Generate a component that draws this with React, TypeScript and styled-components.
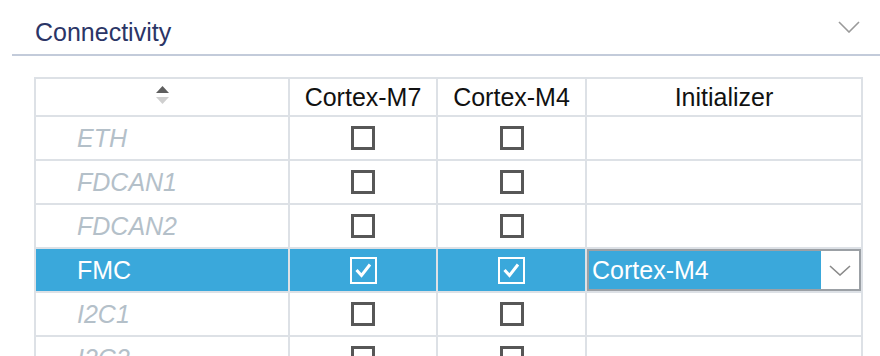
import React from "react";
import styled, { createGlobalStyle } from "styled-components";

const GlobalStyle = createGlobalStyle`
  html, body { margin: 0; padding: 0; background: #ffffff; overflow: hidden; }
  body { font-family: "Liberation Sans", Arial, sans-serif; }
`;

const Page = styled.div`
  width: 880px;
  height: 356px;
  overflow: hidden;
  padding-left: 12px;
  box-sizing: border-box;
`;

const SectionHeader = styled.div`
  display: flex;
  justify-content: space-between;
  align-items: flex-start;
  height: 56px;
  box-sizing: border-box;
  padding: 18px 20px 0 23px;
  border-bottom: 2px solid #c3cbda;
`;

const Title = styled.div`
  font-size: 25px;
  line-height: 29px;
  color: #2b3566;
`;

const Collapse = styled.svg`
  margin-top: 3px;
`;

const Content = styled.div`
  padding: 21px 0 0 22px;
`;

const Grid = styled.div`
  display: grid;
  width: fit-content;
  grid-template-columns: 252px 146px 147px 274px;
  grid-template-rows: 36px;
  grid-auto-rows: 42px;
  gap: 2px;
  padding: 2px;
  background: #dde1e6;
`;

const HeadCell = styled.div`
  background: #ffffff;
  display: flex;
  align-items: center;
  justify-content: center;
  font-size: 25px;
  color: #111111;
`;

const NameCell = styled.div<{ $sel: boolean }>`
  background: ${(p) => (p.$sel ? "#3aa8db" : "#ffffff")};
  display: flex;
  align-items: center;
  padding-left: 41px;
  font-size: 25px;
  font-style: ${(p) => (p.$sel ? "normal" : "italic")};
  color: ${(p) => (p.$sel ? "#ffffff" : "#b4c0c9")};
`;

const Cell = styled.div<{ $sel: boolean }>`
  background: ${(p) => (p.$sel ? "#3aa8db" : "#ffffff")};
  display: flex;
  align-items: center;
  justify-content: center;
`;

const Box = styled.div<{ $on: boolean }>`
  box-sizing: border-box;
  width: ${(p) => (p.$on ? 27 : 24)}px;
  height: ${(p) => (p.$on ? 27 : 24)}px;
  border: ${(p) => (p.$on ? "2px solid #ffffff" : "3px solid #575757")};
  display: flex;
  align-items: center;
  justify-content: center;
`;

const Select = styled.div`
  box-sizing: border-box;
  width: 100%;
  height: 100%;
  display: flex;
  border: 2px solid #9ba0a5;
`;

const SelectLabel = styled.div`
  flex: 1;
  display: flex;
  align-items: center;
  padding-left: 3px;
  background: #3aa8db;
  color: #ffffff;
  font-size: 25px;
`;

const SelectButton = styled.div`
  width: 38px;
  background: #ffffff;
  display: flex;
  align-items: center;
  justify-content: center;
`;

const SortIcon = styled.svg`
  margin-top: -3px;
`;

type Row = { name: string; m7: boolean; m4: boolean; init?: string };

const rows: Row[] = [
  { name: "ETH", m7: false, m4: false },
  { name: "FDCAN1", m7: false, m4: false },
  { name: "FDCAN2", m7: false, m4: false },
  { name: "FMC", m7: true, m4: true, init: "Cortex-M4" },
  { name: "I2C1", m7: false, m4: false },
  { name: "I2C2", m7: false, m4: false },
];

const Check = ({ on }: { on: boolean }) => (
  <Box $on={on}>
    {on && (
      <svg width="23" height="23" viewBox="0 0 23 23">
        <polyline points="4.5,11 9.5,16.5 18,5.5" fill="none" stroke="#ffffff" strokeWidth="3" />
      </svg>
    )}
  </Box>
);

export default function App() {
  return (
    <>
      <GlobalStyle />
      <Page>
        <SectionHeader>
          <Title>Connectivity</Title>
          <Collapse width="22" height="12" viewBox="0 0 22 12">
            <polyline points="1,1 11,11 21,1" fill="none" stroke="#9a9a9a" strokeWidth="1.6" />
          </Collapse>
        </SectionHeader>
        <Content>
          <Grid>
            <HeadCell>
              <SortIcon width="13" height="19" viewBox="0 0 13 19">
                <polygon points="6.5,0 13,7 0,7" fill="#5e5e5e" />
                <polygon points="0,11 13,11 6.5,18" fill="#cfcfcf" />
              </SortIcon>
            </HeadCell>
            <HeadCell>Cortex-M7</HeadCell>
            <HeadCell>Cortex-M4</HeadCell>
            <HeadCell>Initializer</HeadCell>
            {rows.map((r) => {
              const sel = !!r.init;
              return (
                <React.Fragment key={r.name}>
                  <NameCell $sel={sel}>{r.name}</NameCell>
                  <Cell $sel={sel}>
                    <Check on={r.m7} />
                  </Cell>
                  <Cell $sel={sel}>
                    <Check on={r.m4} />
                  </Cell>
                  <Cell $sel={sel}>
                    {r.init && (
                      <Select>
                        <SelectLabel>{r.init}</SelectLabel>
                        <SelectButton>
                          <svg width="22" height="11" viewBox="0 0 22 11">
                            <polyline points="1,1 11,10 21,1" fill="none" stroke="#8a8a8a" strokeWidth="1.6" />
                          </svg>
                        </SelectButton>
                      </Select>
                    )}
                  </Cell>
                </React.Fragment>
              );
            })}
          </Grid>
        </Content>
      </Page>
    </>
  );
}
